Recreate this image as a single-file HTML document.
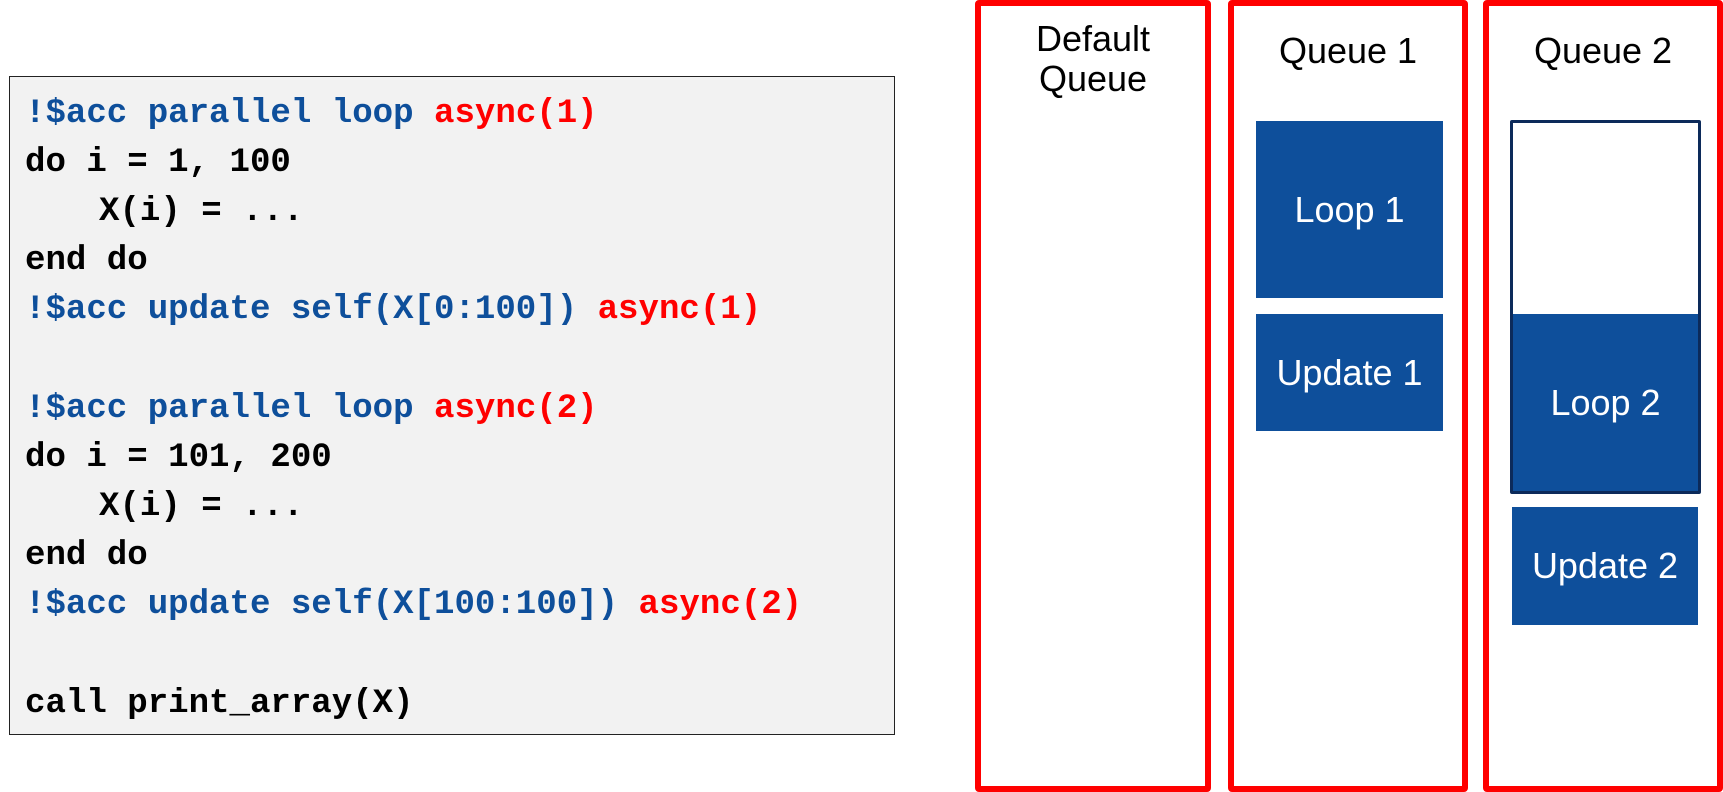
<!DOCTYPE html>
<html><head><meta charset="utf-8"><style>
body{margin:0;width:1723px;height:792px;background:#fff;position:relative;overflow:hidden;font-family:"Liberation Sans",Arial,sans-serif}
.code{position:absolute;left:9px;top:76px;width:886px;height:659px;background:#f2f2f2;border:1px solid #222;box-sizing:border-box}
.l{position:absolute;left:15px;font-family:"Liberation Mono",monospace;font-weight:bold;font-size:34.1px;line-height:40px;white-space:pre;color:#000}
.b{color:#0e4f9b}.r{color:#ff0000}
.q{position:absolute;top:0;height:792px;border:6px solid #ff0000;box-sizing:border-box;border-radius:4px}
.lab{position:absolute;font-size:36px;color:#000;text-align:center;line-height:40px}
.blk{position:absolute;background:#0e4f9b;color:#fff;font-size:36px;display:flex;align-items:center;justify-content:center}
</style></head><body>
<div class="code">
<div class="l" style="top:17px"><span class="b">!$acc parallel loop </span><span class="r">async(1)</span></div>
<div class="l" style="top:66px">do i = 1, 100</div>
<div class="l" style="top:115px;left:89px">X(i) = ...</div>
<div class="l" style="top:164px">end do</div>
<div class="l" style="top:213px"><span class="b">!$acc update self(X[0:100]) </span><span class="r">async(1)</span></div>
<div class="l" style="top:312px"><span class="b">!$acc parallel loop </span><span class="r">async(2)</span></div>
<div class="l" style="top:361px">do i = 101, 200</div>
<div class="l" style="top:410px;left:89px">X(i) = ...</div>
<div class="l" style="top:459px">end do</div>
<div class="l" style="top:508px"><span class="b">!$acc update self(X[100:100]) </span><span class="r">async(2)</span></div>
<div class="l" style="top:607px">call print_array(X)</div>
</div>
<div class="q" style="left:975px;width:236px"></div>
<div class="q" style="left:1228px;width:240px"></div>
<div class="q" style="left:1483px;width:240px"></div>
<div class="lab" style="left:975px;width:236px;top:19px">Default<br>Queue</div>
<div class="lab" style="left:1228px;width:240px;top:31px">Queue 1</div>
<div class="lab" style="left:1483px;width:240px;top:31px">Queue 2</div>
<div class="blk" style="left:1256px;top:121px;width:187px;height:177px">Loop 1</div>
<div class="blk" style="left:1256px;top:314px;width:187px;height:117px">Update 1</div>
<div style="position:absolute;left:1510px;top:120px;width:191px;height:374px;border:3px solid #0c2a5a;box-sizing:border-box;background:#fff;border-radius:2px"></div>
<div class="blk" style="left:1513px;top:314px;width:185px;height:177px">Loop 2</div>
<div class="blk" style="left:1512px;top:507px;width:186px;height:118px">Update 2</div>
</body></html>
